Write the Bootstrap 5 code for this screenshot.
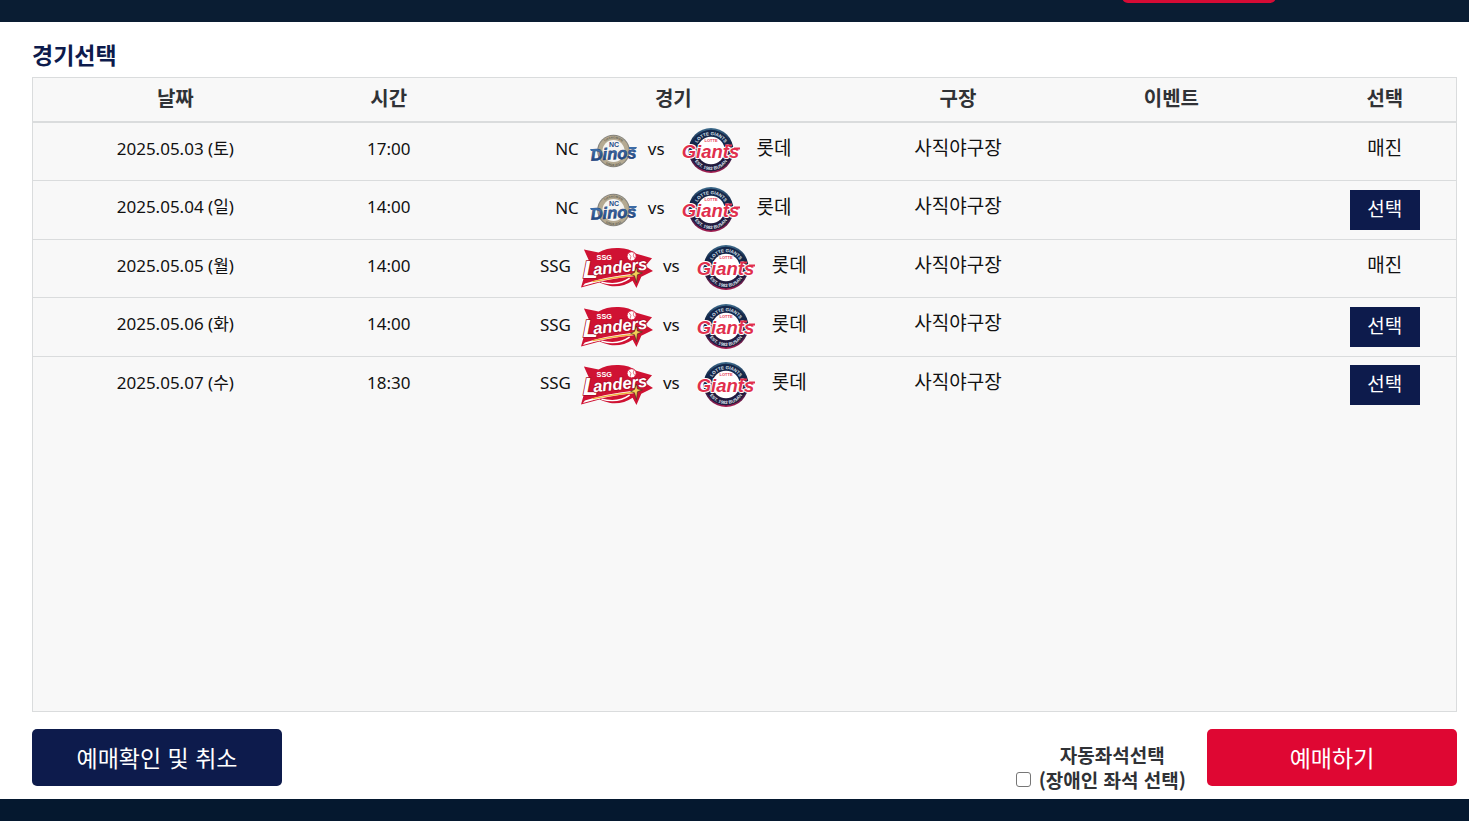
<!DOCTYPE html>
<html lang="ko">
<head>
<meta charset="utf-8">
<meta name="viewport" content="width=device-width, initial-scale=1">
<title>경기선택</title>
<link href="https://cdn.jsdelivr.net/npm/bootstrap@5.3.0/dist/css/bootstrap.min.css" rel="stylesheet">
<style>
  body { font-family: "Noto Sans CJK KR", sans-serif; font-size: 19px; color: #111; }
  .top-bar { height: 22px; background: #0a1d33; padding-right: 193px; }
  .top-tab { width: 154px; height: 40px; margin-bottom: 19px; background: #d50b35; border-radius: 6px; }
  .bottom-bar { height: 22px; background: #05182f; }
  .page-main { padding: 18px 12px 7px 32px; }
  .page-title { font-size: 23px; line-height: 28px; color: #0d1b4c; margin-bottom: 9px; }
  .game-panel { background: #f8f8f8; border: 1px solid #dadcdd; }
  .game-table { --bs-table-bg: transparent; --bs-table-color: #111; table-layout: fixed; border-color: #dadcdd; text-align: center; }
  .game-table th { font-size: 20px; line-height: 24px; height: 44px; padding: 0 0 3px; color: #303236; border-bottom: 2px solid #dadcdd; vertical-align: middle; }
  .game-table td { height: 58px; line-height: 24px; padding: 0; }
  .game-table tr:nth-child(even) td { height: 59px; }
  .game-table .plain-cell { padding-bottom: 9px; }
  .game-table .latin-cell { padding-bottom: 5px; }
  .game-table tbody tr:last-child td { border-bottom: 0; }
  .latin { font-family: "Noto Sans", "Noto Sans CJK KR", sans-serif; font-size: 17px; }
  .w-date { width: 20%; } .w-unit { width: 10%; } .w-match { width: 30%; }
  .latin-name { padding-bottom: 4px; }
  .hangul-name { padding-bottom: 8px; }
  .match-line { gap: 10px; }
  .away-side { gap: 17px; margin-left: 7px; }
  .pick-btn { width: 70px; height: 40px; padding: 0 0 4px; font-size: 19px; line-height: 36px; color: #fff; background: #0d1b4c; border: 0; }
  .action-row { padding-top: 17px; }
  .main-btn { width: 250px; height: 57px; font-size: 23px; line-height: 1; color: #fff; padding: 0; border-radius: 5px; border: 0; }
  .main-btn:hover, .pick-btn:hover { color: #fff; background: #1c2d68; }
  .btn-check-order { background: #0d1b4c; }
  .btn-reserve, .btn-reserve:hover { background: #df0733; }
  .auto-seat { line-height: 25px; color: #303236; margin-right: 21px; padding-top: 13px; gap: 8px; }
  .auto-seat .form-check-input { width: 15px; height: 15px; margin: 0 0 5px; border: 1px solid #767676; border-radius: 3px; }
  .emblem { font-family: "Liberation Sans", sans-serif; font-weight: 700; }
</style>
</head>
<body class="d-flex flex-column min-vh-100">

<svg width="0" height="0" class="position-absolute" aria-hidden="true">
  <defs>
    <linearGradient id="ring" x1="0" y1="0" x2="0" y2="1">
      <stop offset="0" stop-color="#3d6b8c"/><stop offset=".3" stop-color="#152a4b"/>
      <stop offset=".65" stop-color="#241c43"/><stop offset="1" stop-color="#a51d50"/>
    </linearGradient>
    <linearGradient id="steel" x1="0" y1="0" x2="0" y2="1">
      <stop offset="0" stop-color="#5585bb"/><stop offset="1" stop-color="#173c78"/>
    </linearGradient>
    <path id="arcTop" d="M13.500 22.500a15.500 15.500 0 0 1 31 0"/>
    <path id="arcBottom" d="M9.500 22.500a19.500 19.500 0 0 0 39 0"/>
    <path id="dinoTop" d="M11 17a12.500 12.500 0 0 1 25 0"/>
    <path id="dinoBottom" d="M8.500 17a15 15 0 0 0 30 0"/>
  </defs>
</svg>

<header class="top-bar d-flex justify-content-end align-items-end overflow-hidden">
  <div class="top-tab flex-shrink-0"></div>
</header>

<main class="page-main d-flex flex-column flex-grow-1">
  <h1 class="page-title fw-bold">경기선택</h1>

  <section class="game-panel flex-grow-1">
    <table class="table game-table align-middle mb-0">
      <thead>
        <tr>
          <th scope="col" class="w-date">날짜</th>
          <th scope="col" class="w-unit">시간</th>
          <th scope="col" class="w-match">경기</th>
          <th scope="col" class="w-unit">구장</th>
          <th scope="col" class="w-date">이벤트</th>
          <th scope="col" class="w-unit">선택</th>
        </tr>
      </thead>
      <tbody id="games"></tbody>
    </table>
  </section>

  <div class="action-row d-flex justify-content-between align-items-start">
    <button type="button" class="btn main-btn btn-check-order">예매확인 및 취소</button>
    <div class="d-flex align-items-start">
      <div class="auto-seat d-flex align-items-end fw-bold">
        <input class="form-check-input" type="checkbox" id="autoSeat">
        <label for="autoSeat" class="text-center">자동좌석선택<br>(장애인 좌석 선택)</label>
      </div>
      <button type="button" class="btn main-btn btn-reserve">예매하기</button>
    </div>
  </div>
</main>

<footer class="bottom-bar"></footer>

<script src="https://cdn.jsdelivr.net/npm/bootstrap@5.3.0/dist/js/bootstrap.bundle.min.js"></script>
<script>
  const logos = {
    giants: `<svg width="58" height="46" viewBox="0 0 58 46">
      <circle cx="29" cy="22.500" r="22.500" fill="url(#ring)"/>
      <circle cx="29" cy="22.500" r="20.700" fill="#14274a"/>
      <path d="M8.300 22.500a20.700 20.700 0 0 0 41.400 0z" fill="#221b3e"/>
      <circle cx="29" cy="22.500" r="13.700" fill="#fff"/>
      <g class="emblem" font-size="4.500" fill="#dfe6ee" text-anchor="middle">
        <text><textPath href="#arcTop" startOffset="50%">LOTTE GIANTS</textPath></text>
        <text><textPath href="#arcBottom" startOffset="50%">EST. 1982 BUSAN</textPath></text>
        <text x="29" y="14" font-size="4" fill="#e63d56">LOTTE</text>
      </g>
      <text class="emblem" x="28.500" y="29.500" text-anchor="middle" font-size="18.500" font-style="italic" fill="#e02f4d" stroke="#fff" stroke-width="2" paint-order="stroke" stroke-linejoin="round">Giants</text>
      <path d="M43 17.500h7M52 20.500h6" stroke="#e02f4d" stroke-width="2"/>
    </svg>`,
    dinos: `<svg width="49" height="34" viewBox="-1 0 49 34">
      <circle cx="23.500" cy="17" r="16.300" fill="#85837c"/>
      <circle cx="23.500" cy="17" r="15.300" fill="#b5aa92"/>
      <circle cx="23.500" cy="17" r="11" fill="#f5f5f2"/>
      <g class="emblem" font-size="3" fill="#5f5a50" text-anchor="middle">
        <text><textPath href="#dinoTop" startOffset="50%">CHANGWON</textPath></text>
        <text><textPath href="#dinoBottom" startOffset="50%">SINCE 2011</textPath></text>
      </g>
      <text class="emblem" x="24" y="12.500" text-anchor="middle" font-size="7" fill="#254c88">NC</text>
      <text class="emblem" x="23.500" y="25.500" text-anchor="middle" font-size="16.500" font-style="italic" fill="url(#steel)" stroke="#173c78" stroke-width=".5" transform="rotate(-3 24 20)">Dinos</text>
      <path d="M0 15h8l-1 2H1zM39 13h8l-1 2h-7z" fill="#3c6ca7"/>
    </svg>`,
    landers: `<svg width="72" height="42" viewBox="0 0 74 42">
      <path d="M3 2L18 5Q27 0 39 .5Q50 1 56 6L73 11L66 19L74 24L62 30L57 41.500L53 34Q43 41 30 39.500Q23 38 19 36L0 41L8 13z" fill="#cf1233"/>
      <path d="M21 35.500Q38 40 50 31.500" fill="none" stroke="#fff" stroke-width="1.500"/>
      <path d="M4 37Q26 30 54 27V29.500Q28 32 2 39.500z" fill="#fff"/>
      <path d="M12 35Q32 31 54 28.500" fill="none" stroke="#f2b13c" stroke-width="1.500"/>
      <circle cx="52" cy="9" r="4.700" fill="#fff" stroke="#cf1233"/>
      <path d="M49.500 6.500q3 2 1 6M54.500 5.500q-2 3 1 6" fill="none" stroke="#e25166" stroke-width=".8"/>
      <text class="emblem" x="16" y="13" font-size="7.500" fill="#fff">SSG</text>
      <g class="emblem" font-style="italic" fill="#fff" stroke="#a80d28" stroke-width="1.500" paint-order="stroke">
        <text x="2" y="31" font-size="25">L</text>
        <text x="13" y="28.500" font-size="17" transform="rotate(-6 13 28)">anders</text>
      </g>
      <path d="M57 20l1 5 5 1-5 2-1 8-2-7-4-1.500 4-2z" fill="#f4cf56" stroke="#463221" stroke-width=".7"/>
    </svg>`
  };

  const games = [
    ["2025.05.03 (토)", "17:00", "NC", "dinos", false],
    ["2025.05.04 (일)", "14:00", "NC", "dinos", true],
    ["2025.05.05 (월)", "14:00", "SSG", "landers", false],
    ["2025.05.06 (화)", "14:00", "SSG", "landers", true],
    ["2025.05.07 (수)", "18:30", "SSG", "landers", true]
  ];

  document.getElementById("games").innerHTML = games.map(([date, time, team, logo, open]) => `
    <tr>
      <td class="latin latin-cell">${date}</td>
      <td class="latin latin-cell">${time}</td>
      <td>
        <div class="match-line d-flex justify-content-center align-items-center">
          <span class="latin latin-name">${team}</span>${logos[logo]}<span class="latin latin-name">vs</span>
          <div class="away-side d-flex align-items-center">${logos.giants}<span class="hangul-name">롯데</span></div>
        </div>
      </td>
      <td class="plain-cell">사직야구장</td>
      <td></td>
      ${open ? `<td><button type="button" class="btn rounded-0 pick-btn">선택</button></td>` : `<td class="plain-cell">매진</td>`}
    </tr>`).join("");
</script>
</body>
</html>
